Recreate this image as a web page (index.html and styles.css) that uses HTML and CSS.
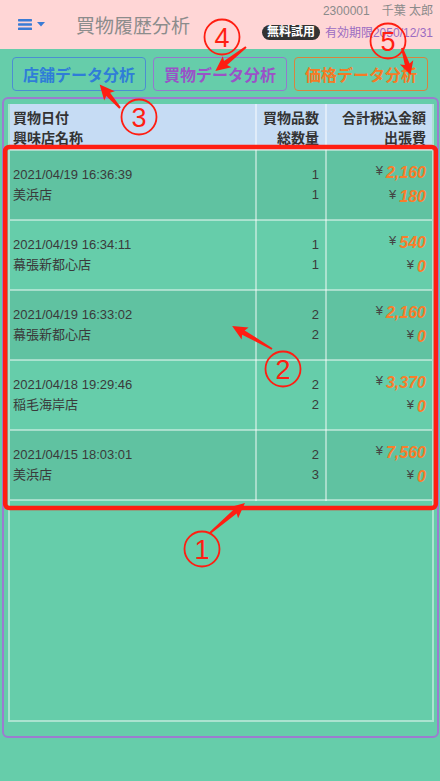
FILE: index.html
```html
<!DOCTYPE html>
<html lang="ja">
<head>
<meta charset="utf-8">
<title>買物履歴分析</title>
<link rel="stylesheet" href="styles.css">
</head>
<body>
<div class="page">
  <header class="topbar">
    <div class="menu">
      <svg class="burger" width="14" height="11" viewBox="0 0 14 11"><rect x="0" y="0" width="14" height="2.4" rx="0.6"/><rect x="0" y="4.3" width="14" height="2.4" rx="0.6"/><rect x="0" y="8.6" width="14" height="2.4" rx="0.6"/></svg>
      <svg class="caret" width="8" height="5" viewBox="0 0 8 5"><polygon points="0,0 8,0 4,4.5"/></svg>
    </div>
    <h1 class="title">買物履歴分析</h1>
    <div class="user">
      <div class="user-id">2300001　千葉 太郎</div>
      <div class="plan"><span class="badge">無料試用</span><span class="expire">有効期限2050/12/31</span></div>
    </div>
  </header>

  <nav class="tabs">
    <button class="tab tab-store">店舗データ分析</button>
    <button class="tab tab-buy">買物データ分析</button>
    <button class="tab tab-price">価格データ分析</button>
  </nav>

  <section class="card">
    <div class="frame">
      <table class="history">
        <colgroup><col class="c1"><col class="c2"><col class="c3"></colgroup>
        <thead>
          <tr>
            <th class="left">買物日付<br>興味店名称</th>
            <th class="right">買物品数<br>総数量</th>
            <th class="right">合計税込金額<br>出張費</th>
          </tr>
        </thead>
        <tbody>
          <tr>
            <td class="left">2021/04/19 16:36:39<br>美浜店</td>
            <td class="right">1<br>1</td>
            <td class="right price"><div><span class="yen">¥</span><span class="num">2,160</span></div><div><span class="yen">¥</span><span class="num">180</span></div></td>
          </tr>
          <tr>
            <td class="left">2021/04/19 16:34:11<br>幕張新都心店</td>
            <td class="right">1<br>1</td>
            <td class="right price"><div><span class="yen">¥</span><span class="num">540</span></div><div><span class="yen">¥</span><span class="num">0</span></div></td>
          </tr>
          <tr>
            <td class="left">2021/04/19 16:33:02<br>幕張新都心店</td>
            <td class="right">2<br>2</td>
            <td class="right price"><div><span class="yen">¥</span><span class="num">2,160</span></div><div><span class="yen">¥</span><span class="num">0</span></div></td>
          </tr>
          <tr>
            <td class="left">2021/04/18 19:29:46<br>稲毛海岸店</td>
            <td class="right">2<br>2</td>
            <td class="right price"><div><span class="yen">¥</span><span class="num">3,370</span></div><div><span class="yen">¥</span><span class="num">0</span></div></td>
          </tr>
          <tr>
            <td class="left">2021/04/15 18:03:01<br>美浜店</td>
            <td class="right">2<br>3</td>
            <td class="right price"><div><span class="yen">¥</span><span class="num">7,560</span></div><div><span class="yen">¥</span><span class="num">0</span></div></td>
          </tr>
        </tbody>
      </table>
    </div>
  </section>

  <svg class="annot" width="440" height="781" viewBox="0 0 440 781">
    <rect class="anno-box" x="5.2" y="147" width="430.6" height="361" rx="4"/>
    <g class="anno">
      <circle cx="202" cy="549" r="17.5"/>
      <text x="202" y="550" class="anno-num">1</text>
      <polygon transform="translate(210,533) rotate(-40.6)" points="0,-1 33,-2.5 31,-7 46,0 31,7 33,2.5 0,1"/>

      <circle cx="283" cy="369" r="17.5"/>
      <text x="283" y="370" class="anno-num">2</text>
      <polygon transform="translate(272,349) rotate(-150.1)" points="0,-1 33,-2.5 31,-7 46,0 31,7 33,2.5 0,1"/>

      <circle cx="139" cy="117" r="17.5"/>
      <text x="139" y="118" class="anno-num">3</text>
      <polygon transform="translate(120,108) rotate(-131)" points="0,-1 18,-2.5 16,-7 31,0 16,7 18,2.5 0,1"/>

      <circle cx="222" cy="37" r="17.5"/>
      <text x="222" y="38" class="anno-num">4</text>
      <polygon transform="translate(246,47) rotate(141.8)" points="0,-1 26,-2.5 24,-7 39,0 24,7 26,2.5 0,1"/>

      <circle cx="388" cy="41" r="17.5"/>
      <text x="388" y="42" class="anno-num">5</text>
      <polygon transform="translate(402,48) rotate(72.2)" points="0,-1 17,-2.5 15,-7 28,0 15,7 17,2.5 0,1"/>
    </g>
  </svg>
</div>
</body>
</html>
```

FILE: styles.css
```css
html, body {
  margin: 0;
  padding: 0;
}
body {
  background: #66cdaa;
  font-family: "Liberation Sans", "Noto Sans CJK JP", sans-serif;
  color: #333;
}
.page {
  position: relative;
  width: 440px;
  min-height: 781px;
}

/* header */
.topbar {
  display: flex;
  align-items: center;
  height: 49px;
  background: #ffd6d6;
  padding: 0 7px 0 18px;
  box-sizing: border-box;
}
.menu {
  display: flex;
  align-items: center;
  gap: 5px;
}
.burger { fill: #3a7bd5; display: block; }
.caret { fill: #3a7bd5; display: block; }
.title {
  margin: 0 0 0 31px;
  font-family: "Noto Sans CJK JP", sans-serif;
  font-size: 19px;
  font-weight: normal;
  color: #8c8c8c;
  line-height: 24px;
}
.user {
  margin-left: auto;
  align-self: flex-start;
  padding-top: 4px;
  text-align: right;
}
.user-id {
  font-size: 12px;
  line-height: 14px;
  color: #8a8a8a;
}
.plan {
  display: flex;
  align-items: center;
  justify-content: flex-end;
  gap: 5px;
  margin-top: 7px;
}
.badge {
  background: #333;
  color: #fff;
  font-weight: bold;
  font-size: 12px;
  line-height: 15px;
  padding: 0 5px;
  border-radius: 8px;
}
.expire {
  font-size: 12px;
  line-height: 14px;
  color: #9b6cc2;
}

/* tabs */
.tabs {
  display: flex;
  gap: 7px;
  padding: 8px 0 0 12px;
}
.tab {
  width: 134px;
  height: 34px;
  box-sizing: border-box;
  background: transparent;
  border: 1px solid;
  border-radius: 4px;
  padding: 0;
  font-family: "Noto Sans CJK JP", sans-serif;
  font-weight: bold;
  font-size: 16px;
  display: flex;
  align-items: center;
  justify-content: center;
}
.tab-store { color: #2f7dd8; border-color: #4b8ed2; }
.tab-buy { color: #9a52c8; border-color: #9479cf; }
.tab-price { color: #f57b25; border-color: #d8843e; }

/* card & table */
.card {
  margin: 6px 1px 0 2px;
  border: 2px solid #9c7cd0;
  border-radius: 6px;
  padding: 5px 3px 14px 4px;
}
.frame {
  height: 618px;
  box-sizing: border-box;
  border: 2px solid rgba(255, 255, 255, 0.45);
  border-top: 0;
}
.history {
  width: 100%;
  border-collapse: collapse;
  table-layout: fixed;
}
.c1 { width: 246px; }
.c2 { width: 70px; }
.history th,
.history td {
  border: 2px solid rgba(255, 255, 255, 0.45);
  padding: 0 6px 0 3px;
}
.history tr > :first-child { border-left: 0; }
.history tr > :last-child { border-right: 0; }
.history thead th { border-top: 0; }
.history th {
  height: 46px;
  box-sizing: border-box;
  background: #c6dcf4;
  font-family: "Noto Sans CJK JP", sans-serif;
  font-weight: bold;
  font-size: 14px;
  line-height: 20px;
  color: #333;
  vertical-align: middle;
  padding-top: 0;
}
.history td {
  height: 70px;
  box-sizing: border-box;
  font-size: 13px;
  line-height: 20px;
  color: #3a3a3a;
  vertical-align: middle;
}
.history tbody tr:nth-child(odd) td {
  background: rgba(0, 0, 0, 0.05);
}
.left { text-align: left; }
.right { text-align: right; }
.price { line-height: 23px; }
.price div { line-height: 23px; }
.yen {
  font-size: 13px;
  color: #444;
  position: relative;
  top: -3px;
  margin-right: 3px;
}
.num {
  font-weight: bold;
  font-style: italic;
  font-size: 16px;
  color: #fa7d2a;
}

/* annotation overlay */
.annot {
  position: absolute;
  left: 0;
  top: 0;
  pointer-events: none;
}
.anno-box {
  fill: none;
  stroke: #ff1e12;
  stroke-width: 4.5;
}
.anno circle {
  fill: none;
  stroke: #ff1e12;
  stroke-width: 1.8;
}
.anno polygon {
  fill: #ff1e12;
}
.anno-num {
  fill: #ff1e12;
  font-family: "Liberation Sans", sans-serif;
  font-size: 27px;
  text-anchor: middle;
  dominant-baseline: central;
}
```
